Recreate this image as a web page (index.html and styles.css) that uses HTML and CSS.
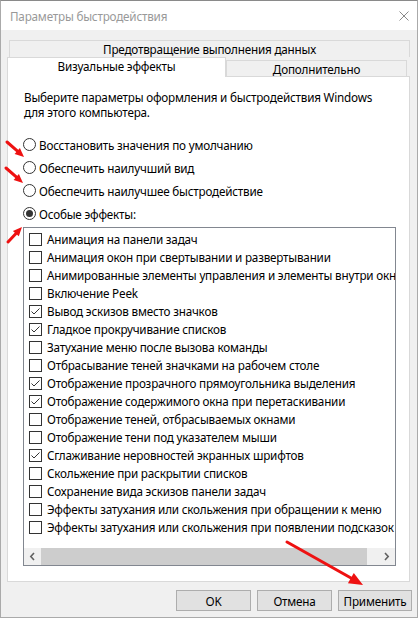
FILE: index.html
```html
<!DOCTYPE html>
<html lang="ru">
<head>
<meta charset="utf-8">
<title>Параметры быстродействия</title>
<link rel="stylesheet" href="styles.css">
</head>
<body>
<div class="window">
  <div class="titlebar">
    <span class="title">Параметры быстродействия</span>
    <svg class="close" width="10" height="10" viewBox="0 0 10 10"><path d="M0.5 0.5 L9.5 9.5 M9.5 0.5 L0.5 9.5" stroke="#8a8a8a" stroke-width="1" fill="none"/></svg>
  </div>
  <div class="content">
    <div class="tab-top">Предотвращение выполнения данных</div>
    <div class="tab-row">
      <div class="tab active">Визуальные эффекты</div>
      <div class="tab">Дополнительно</div>
    </div>
    <div class="panel">
      <p class="intro">Выберите параметры оформления и быстродействия Windows<br>для этого компьютера.</p>
      <div class="radios">
        <div class="radio"><span class="rb"></span>Восстановить значения по умолчанию</div>
        <div class="radio"><span class="rb"></span>Обеспечить наилучший вид</div>
        <div class="radio"><span class="rb"></span>Обеспечить наилучшее быстродействие</div>
        <div class="radio"><span class="rb on"></span>Особые эффекты:</div>
      </div>
      <div class="listbox">
        <div class="list">
          <div class="row"><span class="cb"></span>Анимация на панели задач</div>
          <div class="row"><span class="cb"></span>Анимация окон при свертывании и развертывании</div>
          <div class="row"><span class="cb"></span>Анимированные элементы управления и элементы внутри окна</div>
          <div class="row"><span class="cb"></span>Включение Peek</div>
          <div class="row"><span class="cb"><svg width="11" height="11" viewBox="0 0 11 11"><path d="M1.5 5.5 L4 8 L9.5 2.5" stroke="#333" stroke-width="1" fill="none"/></svg></span>Вывод эскизов вместо значков</div>
          <div class="row"><span class="cb"><svg width="11" height="11" viewBox="0 0 11 11"><path d="M1.5 5.5 L4 8 L9.5 2.5" stroke="#333" stroke-width="1" fill="none"/></svg></span>Гладкое прокручивание списков</div>
          <div class="row"><span class="cb"></span>Затухание меню после вызова команды</div>
          <div class="row"><span class="cb"></span>Отбрасывание теней значками на рабочем столе</div>
          <div class="row"><span class="cb"><svg width="11" height="11" viewBox="0 0 11 11"><path d="M1.5 5.5 L4 8 L9.5 2.5" stroke="#333" stroke-width="1" fill="none"/></svg></span>Отображение прозрачного прямоугольника выделения</div>
          <div class="row"><span class="cb"><svg width="11" height="11" viewBox="0 0 11 11"><path d="M1.5 5.5 L4 8 L9.5 2.5" stroke="#333" stroke-width="1" fill="none"/></svg></span>Отображение содержимого окна при перетаскивании</div>
          <div class="row"><span class="cb"></span>Отображение теней, отбрасываемых окнами</div>
          <div class="row"><span class="cb"></span>Отображение тени под указателем мыши</div>
          <div class="row"><span class="cb"><svg width="11" height="11" viewBox="0 0 11 11"><path d="M1.5 5.5 L4 8 L9.5 2.5" stroke="#333" stroke-width="1" fill="none"/></svg></span>Сглаживание неровностей экранных шрифтов</div>
          <div class="row"><span class="cb"></span>Скольжение при раскрытии списков</div>
          <div class="row"><span class="cb"></span>Сохранение вида эскизов панели задач</div>
          <div class="row"><span class="cb"></span>Эффекты затухания или скольжения при обращении к меню</div>
          <div class="row"><span class="cb"></span>Эффекты затухания или скольжения при появлении подсказок</div>
        </div>
        <div class="hscroll">
          <span class="arr"><svg width="7" height="9" viewBox="0 0 7 9"><path d="M5 1 L1.8 4.5 L5 8" stroke="#606060" stroke-width="1.6" fill="none"/></svg></span>
          <div class="track"><div class="thumb"></div></div>
          <span class="arr"><svg width="7" height="9" viewBox="0 0 7 9"><path d="M2 1 L5.2 4.5 L2 8" stroke="#606060" stroke-width="1.6" fill="none"/></svg></span>
        </div>
      </div>
    </div>
    <div class="buttons">
      <div class="btn">OK</div>
      <div class="btn">Отмена</div>
      <div class="btn apply">Применить</div>
    </div>
  </div>
</div>
<svg class="arrows" width="419" height="623" viewBox="0 0 419 623">
  <g stroke="#ee1111" stroke-width="3" stroke-linecap="round" fill="none">
    <path d="M7 142 L17.5 151.2"/>
    <path d="M6 168 L16.5 177.2"/>
    <path d="M8 242 L16 233.4"/>
    <path d="M287 542 L351 578"/>
  </g>
  <g fill="#ee1111">
    <polygon points="24,157 14.6,154 19.9,148"/>
    <polygon points="23,183 13.6,180 18.9,174"/>
    <polygon points="22,227 18.8,236.3 12.9,230.9"/>
    <polygon points="363,585 347.9,583.3 353.8,572.9"/>
  </g>
</svg>
</body>
</html>
```
FILE: styles.css
```css
* { box-sizing: border-box; }
html, body { margin: 0; padding: 0; }
body {
  width: 419px;
  height: 623px;
  background: #ffffff;
  font-family: "Noto Sans", "Open Sans", sans-serif;
  font-size: 11.7px;
  letter-spacing: -0.2px;
  color: #000;
  position: relative;
  overflow: hidden;
}
.window {
  width: 418px;
  height: 618px;
  border: 1px solid #aaaaaa;
  border-top-color: #8a8a8a;
  background: #f0f0f0;
  display: flex;
  flex-direction: column;
}
.titlebar {
  height: 29px;
  flex: none;
  background: #fff;
  display: flex;
  align-items: center;
  justify-content: space-between;
  padding: 0 8px 0 9px;
}
.title { color: #999; }
.close { display: block; }
.content {
  flex: 1;
  display: flex;
  flex-direction: column;
  padding: 10px 5px 0 6px;
}
.tab-top {
  margin-left: 2px;
  width: 401px;
  height: 17px;
  flex: none;
  border: 1px solid #d9d9d9;
  border-bottom: none;
  text-align: center;
  line-height: 17px;
}
.tab-row {
  display: flex;
  align-items: flex-end;
  height: 20px;
  flex: none;
  margin-bottom: -1px;
  z-index: 1;
}
.tab {
  width: 181px;
  height: 17px;
  border: 1px solid #d9d9d9;
  background: #f0f0f0;
  text-align: center;
  line-height: 16px;
}
.tab.active {
  width: 219px;
  height: 20px;
  background: #fff;
  border-bottom: none;
  line-height: 17px;
}
.panel {
  width: 403px;
  height: 506px;
  flex: none;
  border: 1px solid #d9d9d9;
  background: #fff;
  padding: 13px 0 0 16px;
}
.intro { margin: 0; line-height: 15px; }
.radios { margin-top: 13px; margin-left: -1px; }
.radio {
  height: 23px;
  display: flex;
  align-items: center;
  gap: 3px;
}
.rb {
  width: 13px;
  height: 13px;
  border: 1px solid #333;
  border-radius: 50%;
  background: #fff;
  display: flex;
  align-items: center;
  justify-content: center;
  flex: none;
}
.rb.on::after {
  content: "";
  width: 7px;
  height: 7px;
  border-radius: 50%;
  background: #333;
}
.listbox {
  margin-top: 2px;
  margin-left: -1px;
  width: 373px;
  height: 339px;
  border: 1px solid #828790;
  display: flex;
  flex-direction: column;
}
.list {
  flex: 1;
  padding: 2px 0 0 5px;
  overflow: hidden;
}
.row {
  height: 18px;
  display: flex;
  align-items: center;
  gap: 5px;
  white-space: nowrap;
}
.cb {
  width: 13px;
  height: 13px;
  border: 1px solid #333;
  background: #fff;
  flex: none;
  display: flex;
  align-items: center;
  justify-content: center;
}
.cb svg { display: block; }
.hscroll {
  height: 17px;
  flex: none;
  display: flex;
  background: #f0f0f0;
}
.arr {
  width: 17px;
  display: flex;
  align-items: center;
  justify-content: center;
}
.arr svg { display: block; }
.track { flex: 1; }
.thumb { width: 326px; height: 100%; background: #cdcdcd; }
.buttons {
  display: flex;
  justify-content: flex-end;
  gap: 6px;
  margin-top: 8px;
}
.btn {
  width: 75px;
  height: 21px;
  border: 1px solid #adadad;
  background: #e1e1e1;
  display: flex;
  align-items: center;
  justify-content: center;
}
.btn.apply { width: 74px; }
.arrows {
  position: absolute;
  left: 0;
  top: 0;
  pointer-events: none;
}
```
